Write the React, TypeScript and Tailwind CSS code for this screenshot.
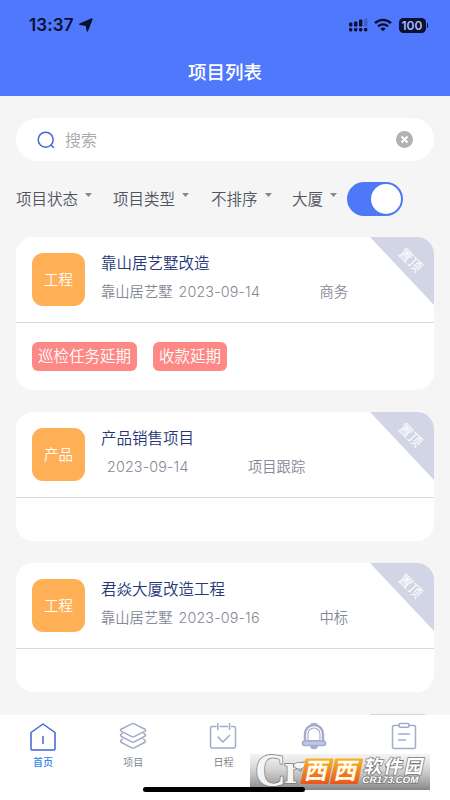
import React from "react";

type Project = {
  type: string;
  name: string;
  owner?: string;
  date: string;
  stage: string;
  tags: string[];
};

const projects: Project[] = [
  {
    type: "工程",
    name: "靠山居艺墅改造",
    owner: "靠山居艺墅",
    date: "2023-09-14",
    stage: "商务",
    tags: ["巡检任务延期", "收款延期"],
  },
  { type: "产品", name: "产品销售项目", date: "2023-09-14", stage: "项目跟踪", tags: [] },
  {
    type: "工程",
    name: "君焱大厦改造工程",
    owner: "靠山居艺墅",
    date: "2023-09-16",
    stage: "中标",
    tags: [],
  },
];

const StatusBar = () => (
  <div className="flex h-[50px] items-center pl-[29px] pr-[22px] text-[#0b1030]">
    <span className="text-[17px] font-semibold leading-none tracking-[0.1px]">13:37</span>
    <svg className="ml-[5px]" width="14" height="14" viewBox="0 0 14 14" fill="currentColor" stroke="currentColor" strokeWidth="1.4" strokeLinejoin="round">
      <path d="M13 1 8.3 13 7.3 7.2 0.8 6.2Z" />
    </svg>
    <svg className="ml-auto" width="20" height="14" viewBox="0 0 20 14" fill="currentColor">
      <rect x="0" y="4.5" width="3.4" height="4" rx="1" />
      <rect x="5" y="3.5" width="3.4" height="5" rx="1" />
      <rect x="10" y="1.5" width="3.4" height="7" rx="1" />
      <rect x="15" y="0.5" width="3.4" height="8" rx="1" opacity="0.25" />
      <rect x="0" y="10" width="3.4" height="3.5" rx="1.4" />
      <rect x="5" y="10" width="3.4" height="3.5" rx="1.4" />
      <rect x="10" y="10" width="3.4" height="3.5" rx="1.4" />
      <rect x="15" y="10" width="3.4" height="3.5" rx="1.4" />
    </svg>
    <svg className="ml-[5px]" width="18" height="14" viewBox="0 0 18 14" fill="none" stroke="currentColor" strokeWidth="2.3">
      <path d="M1 5.2a11.500 11.500 0 0 1 16 0" />
      <path d="M4 8.4a7.200 7.200 0 0 1 10 0" />
      <path d="M9 13.3 6.4 10.7a3.800 3.800 0 0 1 5.200 0Z" fill="currentColor" stroke="none" />
    </svg>
    <div className="ml-[7px] flex h-[15px] w-[27px] items-center justify-center rounded-[4.5px] bg-[#0b1030] text-[12px] font-semibold leading-[15px] text-[#a9bbff]">
      100
    </div>
    <div className="ml-px h-[5px] w-[1.5px] rounded-r bg-[#0b1030]" />
  </div>
);

const Filter = ({ label, className }: { label: string; className: string }) => (
  <div className={`flex shrink-0 items-center text-[15.5px] leading-6 text-[#505460] ${className}`}>
    <span className="pt-px">{label}</span>
    <svg className="mb-[9px] ml-[7px]" width="7" height="4" viewBox="0 0 7 4">
      <path d="M0 0h7L3.5 4Z" fill="#85878d" />
    </svg>
  </div>
);

const ProjectCard = ({ project }: { project: Project }) => (
  <div className="relative shrink-0 overflow-hidden rounded-[17px] bg-white">
    <div className="flex h-[86px] border-b border-[#d9dade] pl-4 pt-[16px]">
      <div className="flex size-[53px] items-center justify-center rounded-[11px] bg-[#ffb056] text-[14.5px] text-white">
        {project.type}
      </div>
      <div className="ml-4 text-[14.3px] text-[#858896]">
        <div className="pt-px text-[15.5px] leading-[20px] text-[#263878]">{project.name}</div>
        <div className="mt-[8px] flex leading-5">
          {project.owner && <span className="mr-[6px]">{project.owner}</span>}
          <span className={`w-[141px] tracking-[0.15px] ${project.owner ? "" : "ml-[6px]"}`}>{project.date}</span>
          <span>{project.stage}</span>
        </div>
      </div>
    </div>
    <div className={project.tags.length ? "flex h-[67px] gap-4 pl-4 pt-[19px]" : "h-[43px]"}>
      {project.tags.map((tag) => (
        <span key={tag} className="h-[29px] rounded-[6px] bg-[#fd8886] px-[6px] text-[15.5px] leading-[30px] text-white">
          {tag}
        </span>
      ))}
    </div>
    <div className="absolute right-0 top-0 h-[68px] w-[64px] bg-[#d1d5e5] [clip-path:polygon(0_0,100%_0,100%_100%)]">
      <span className="absolute left-[27px] top-[13px] rotate-45 text-[13.5px] font-normal leading-5 text-white">置顶</span>
    </div>
  </div>
);

const tabs = [
  {
    label: "首页",
    icon: (
      <>
        <path d="M2 10.5 14 2l12 8.500V27a1 1 0 0 1-1 1H3a1 1 0 0 1-1-1Z" />
        <path d="M14 14.5v7" />
      </>
    ),
  },
  {
    label: "项目",
    icon: (
      <>
        <path d="M12.8 1.9Q14 1.3 15.2 1.9L25.5 7Q27.5 8.2 25.5 9.4L15.2 14.6Q14 15.2 12.8 14.6L2.5 9.4Q.5 8.2 2.5 7Z" />
        <path d="M3.5 11.2 2.5 12Q.5 13.300 2.5 14.500L12.8 19.900Q14 20.500 15.2 19.900L25.5 14.500Q27.5 13.300 25.5 12L24.5 11.200" />
        <path d="M3.5 17.2 2.5 18Q.5 19.300 2.5 20.500L12.8 25.900Q14 26.500 15.2 25.900L25.5 20.500Q27.5 19.300 25.5 18L24.5 17.200" />
      </>
    ),
  },
  {
    label: "日程",
    icon: (
      <>
        <path d="M7 4.5H3A1.5 1.5 0 0 0 1.5 6v18.500A1.5 1.5 0 0 0 3 26h22a1.5 1.5 0 0 0 1.5-1.500V6A1.5 1.5 0 0 0 25 4.500h-2.500M11 4.500h7.500M8.800 1.500v6M20.500 1.500v6" />
        <path d="m9 15 5 5 6.500-6.500" />
      </>
    ),
  },
  {
    label: "",
    icon: (
      <>
        <path d="M5 19.5V12a9 9 0 0 1 18 0v7.500" strokeWidth="2.4" />
        <path d="M8 18.500V12a6 6 0 0 1 12 0v6.500ZM11 3C11 .7 17 .7 17 3" strokeWidth="1.1" />
        <rect x="2.5" y="19" width="23" height="4.5" rx="2.2" fill="#bdc8e9" />
        <path d="M11 24.5h6c0 2.500-6 2.500-6 0Z" fill="#a6b1d5" />
      </>
    ),
  },
  {
    label: "",
    icon: (
      <>
        <path d="M9 3.5H4A1.5 1.5 0 0 0 2.500 5v20A1.5 1.5 0 0 0 4 26.500h20a1.5 1.5 0 0 0 1.500-1.500V5A1.5 1.5 0 0 0 24 3.500h-5" />
        <rect x="9" y="1.5" width="10" height="3.8" rx="1.2" />
        <path d="M8.5 12h11M8.5 18h7" />
      </>
    ),
  },
];

const TabBar = () => (
  <div className="flex h-[85px] shrink-0 bg-white pt-[7px]">
    {tabs.map((tab, i) => (
      <div
        key={i}
        className={`flex shrink-0 flex-col items-center ${i === 0 ? "-ml-[2px] w-[90px] text-[#3c66d6]" : "w-[90.3px] text-[#a2abc9]"}`}
      >
        <svg width="28" height="30" viewBox="0 0 28 30" fill="none" stroke="currentColor" strokeWidth="1.5" strokeLinecap="round" strokeLinejoin="round">
          {tab.icon}
        </svg>
        {tab.label && (
          <span className={`mt-[2px] text-[10px] leading-[16px] ${i === 0 ? "font-medium text-[#2f86ea]" : "text-[#777982]"}`}>
            {tab.label}
          </span>
        )}
      </div>
    ))}
  </div>
);

const Watermark = () => (
  <svg className="absolute left-[250px] top-[750px]" width="181" height="41" viewBox="0 0 181 41">
    <defs>
      <linearGradient id="shade" x1="0" y1="0" x2="0" y2="1">
        <stop offset="0" stopColor="#d8d8d8" stopOpacity="0.3" />
        <stop offset="1" stopColor="#858585" />
      </linearGradient>
      <linearGradient id="orange" x1="0" y1="0" x2="0" y2="1">
        <stop offset="0" stopColor="#f6b526" />
        <stop offset="1" stopColor="#e9551d" />
      </linearGradient>
    </defs>
    <rect y="4" width="180" height="36" fill="url(#shade)" />
    <g fill="#f4f4f4" stroke="#777" strokeWidth="1.5" paintOrder="stroke" fontFamily="Liberation Serif, serif" fontWeight="700">
      <text x="5" y="35.5" fontSize="47" textLength="31" lengthAdjust="spacingAndGlyphs">C</text>
      <text x="34" y="33" fontSize="43" textLength="18" lengthAdjust="spacingAndGlyphs">r</text>
      <path d="M44 15c3-4 7-1 12-3-1 7-8 9-12 4Z" />
    </g>
    <g transform="skewX(-12)">
      <rect x="57.5" y="8.5" width="28" height="25.5" rx="1" fill="url(#orange)" />
      <rect x="87" y="8.5" width="28" height="25.5" rx="1" fill="url(#orange)" />
      <g fill="#fffbea" fontFamily="Noto Sans CJK SC, sans-serif" fontWeight="700">
        <text x="60" y="29.5" fontSize="23">西</text>
        <text x="89.5" y="29.5" fontSize="23">西</text>
      </g>
      <g fill="#fff" stroke="#777" strokeWidth="1.5" paintOrder="stroke" fontWeight="700">
        <text x="118" y="23" fontSize="18.5" textLength="59" fontFamily="Noto Sans CJK SC, sans-serif">软件园</text>
        <text x="119" y="33.5" fontSize="9.5" textLength="56" lengthAdjust="spacingAndGlyphs" fontFamily="Liberation Sans, sans-serif">CR173.COM</text>
      </g>
    </g>
  </svg>
);

const App = () => {
  return (
    <div className="relative flex h-[800px] w-[450px] flex-col overflow-hidden bg-[#f5f5f6] font-['Inter','Noto_Sans_CJK_SC',sans-serif] font-[350]">
      <header className="h-24 shrink-0 bg-[#5078fc]">
        <StatusBar />
        <h1 className="text-center text-[18.5px] font-medium leading-[44px] text-white">项目列表</h1>
      </header>
      <main className="flex min-h-0 flex-1 flex-col overflow-hidden px-4 pt-[22px]">
        <div className="flex h-[43px] shrink-0 items-center rounded-full bg-white px-[21px]">
          <svg width="18" height="18" viewBox="0 0 18 18" fill="none" stroke="#4268d2" strokeWidth="1.5" strokeLinecap="round">
            <circle cx="8.7" cy="8.7" r="7.5" />
            <path d="m14 14 2.5 2.5" />
          </svg>
          <span className="ml-[10px] text-[16px] text-[#a8a8ab]">搜索</span>
          <svg className="ml-auto" width="17" height="17" viewBox="0 0 17 17">
            <circle cx="8.5" cy="8.5" r="8.5" fill="#b2b2b2" />
            <path d="m5.5 5.5 6 6m0-6-6 6" stroke="#fff" strokeWidth="2" />
          </svg>
        </div>
        <div className="mt-[21px] flex h-[34px] shrink-0 items-center">
          <Filter label="项目状态" className="w-[97px]" />
          <Filter label="项目类型" className="w-[98px]" />
          <Filter label="不排序" className="w-[81px]" />
          <Filter label="大厦" className="w-[55px]" />
          <div className="flex h-[34px] w-[56px] shrink-0 items-center justify-end rounded-full bg-[#4d78f7] pr-[2px]">
            <div className="size-[30px] rounded-full bg-white" />
          </div>
        </div>
        <div className="mt-[21px] flex flex-col gap-[22px]">
          {projects.map((project) => (
            <ProjectCard key={project.name} project={project} />
          ))}
          {/* top edge of the next card */}
          <div className="flex h-[2px] justify-end">
            <div className="mr-[9px] w-[55px] bg-[#d1d5e5]" />
          </div>
        </div>
      </main>
      <TabBar />
      <Watermark />
      <div className="absolute left-[143px] top-[787px] h-[5px] w-[162px] rounded-full bg-black" />
    </div>
  );
};

export default App;
